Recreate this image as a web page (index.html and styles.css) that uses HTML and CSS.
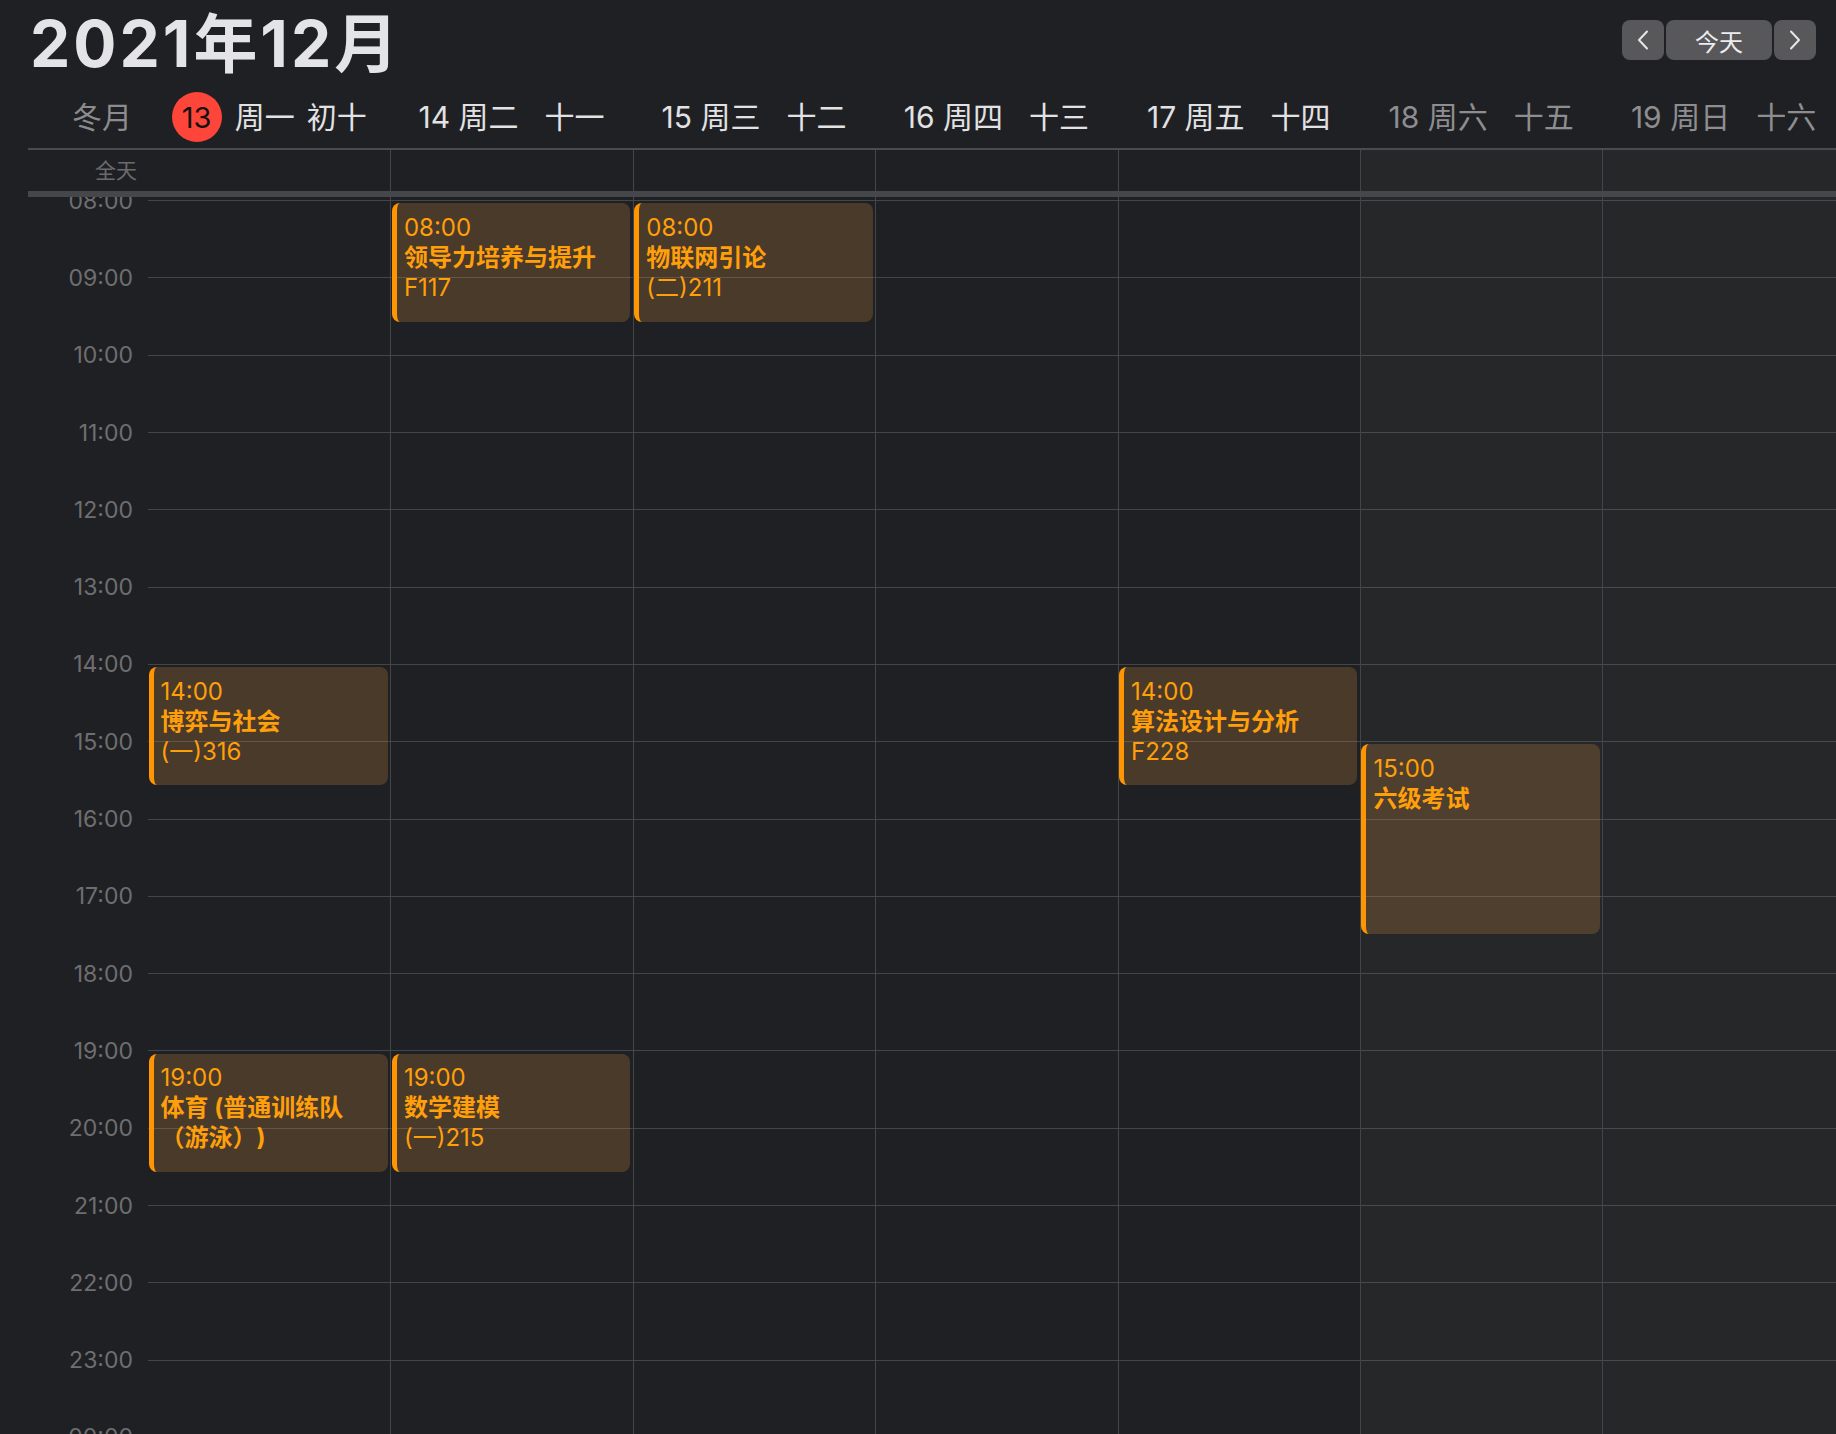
FILE: index.html
```html
<!DOCTYPE html>
<html lang="zh-CN">
<head>
    <meta charset="UTF-8">
    <meta name="viewport" content="width=device-width, initial-scale=1.0">
    <title>日历 - 2021年12月</title>
    <link rel="stylesheet" href="styles.css">
</head>
<body>
    <div class="calendar">
        <div class="topbar">
            <h1 class="month">2021年12月</h1>
            <div class="nav">
                <button class="nav-btn arrow" aria-label="上一周">
                    <svg width="14" height="20" viewBox="0 0 14 20"><polyline points="11,1.5 3,10 11,18.5" /></svg>
                </button>
                <button class="nav-btn today">今天</button>
                <button class="nav-btn arrow" aria-label="下一周">
                    <svg width="14" height="20" viewBox="0 0 14 20"><polyline points="3,1.5 11,10 3,18.5" /></svg>
                </button>
            </div>
        </div>

        <div class="days">
            <div class="lunar-month">冬月</div>
            <div class="day day-today">
                <span class="day-main"><span class="today-badge">13</span>周一</span>
                <span class="day-lunar">初十</span>
            </div>
            <div class="day">
                <span class="day-main">14 周二</span>
                <span class="day-lunar">十一</span>
            </div>
            <div class="day">
                <span class="day-main">15 周三</span>
                <span class="day-lunar">十二</span>
            </div>
            <div class="day">
                <span class="day-main">16 周四</span>
                <span class="day-lunar">十三</span>
            </div>
            <div class="day">
                <span class="day-main">17 周五</span>
                <span class="day-lunar">十四</span>
            </div>
            <div class="day weekend">
                <span class="day-main">18 周六</span>
                <span class="day-lunar">十五</span>
            </div>
            <div class="day weekend">
                <span class="day-main">19 周日</span>
                <span class="day-lunar">十六</span>
            </div>
        </div>

        <div class="allday">
            <div class="allday-label">全天</div>
            <div class="allday-cell first"></div>
            <div class="allday-cell"></div>
            <div class="allday-cell"></div>
            <div class="allday-cell"></div>
            <div class="allday-cell"></div>
            <div class="allday-cell weekend"></div>
            <div class="allday-cell weekend"></div>
        </div>

        <div class="divider"></div>

        <div class="timeline">
            <div class="hours">
                <div class="hour"><span class="hour-label">08:00</span><span class="hour-line"></span></div>
                <div class="hour"><span class="hour-label">09:00</span><span class="hour-line"></span></div>
                <div class="hour"><span class="hour-label">10:00</span><span class="hour-line"></span></div>
                <div class="hour"><span class="hour-label">11:00</span><span class="hour-line"></span></div>
                <div class="hour"><span class="hour-label">12:00</span><span class="hour-line"></span></div>
                <div class="hour"><span class="hour-label">13:00</span><span class="hour-line"></span></div>
                <div class="hour"><span class="hour-label">14:00</span><span class="hour-line"></span></div>
                <div class="hour"><span class="hour-label">15:00</span><span class="hour-line"></span></div>
                <div class="hour"><span class="hour-label">16:00</span><span class="hour-line"></span></div>
                <div class="hour"><span class="hour-label">17:00</span><span class="hour-line"></span></div>
                <div class="hour"><span class="hour-label">18:00</span><span class="hour-line"></span></div>
                <div class="hour"><span class="hour-label">19:00</span><span class="hour-line"></span></div>
                <div class="hour"><span class="hour-label">20:00</span><span class="hour-line"></span></div>
                <div class="hour"><span class="hour-label">21:00</span><span class="hour-line"></span></div>
                <div class="hour"><span class="hour-label">22:00</span><span class="hour-line"></span></div>
                <div class="hour"><span class="hour-label">23:00</span><span class="hour-line"></span></div>
                <div class="hour"><span class="hour-label">00:00</span><span class="hour-line"></span></div>
            </div>

            <!-- event top = 3.7 + (start - 8) * 77.3 + 2.5, height = minutes / 60 * 77.3 - 4 -->
            <div class="cols">
                <div class="col first">
                    <div class="event" style="top: 470px; height: 118.4px;">
                        <div class="ev-time">14:00</div>
                        <div class="ev-title">博弈与社会</div>
                        <div class="ev-room">(一)316</div>
                    </div>
                    <div class="event" style="top: 856.5px; height: 118.4px;">
                        <div class="ev-time">19:00</div>
                        <div class="ev-title">体育 (普通训练队（游泳）)</div>
                    </div>
                </div>
                <div class="col">
                    <div class="event" style="top: 6.2px; height: 118.4px;">
                        <div class="ev-time">08:00</div>
                        <div class="ev-title">领导力培养与提升</div>
                        <div class="ev-room">F117</div>
                    </div>
                    <div class="event" style="top: 856.5px; height: 118.4px;">
                        <div class="ev-time">19:00</div>
                        <div class="ev-title">数学建模</div>
                        <div class="ev-room">(一)215</div>
                    </div>
                </div>
                <div class="col">
                    <div class="event" style="top: 6.2px; height: 118.4px;">
                        <div class="ev-time">08:00</div>
                        <div class="ev-title">物联网引论</div>
                        <div class="ev-room">(二)211</div>
                    </div>
                </div>
                <div class="col"></div>
                <div class="col">
                    <div class="event" style="top: 470px; height: 118.4px;">
                        <div class="ev-time">14:00</div>
                        <div class="ev-title">算法设计与分析</div>
                        <div class="ev-room">F228</div>
                    </div>
                </div>
                <div class="col weekend">
                    <div class="event" style="top: 547.3px; height: 189.3px;">
                        <div class="ev-time">15:00</div>
                        <div class="ev-title">六级考试</div>
                    </div>
                </div>
                <div class="col weekend"></div>
            </div>
        </div>
    </div>
</body>
</html>
```

FILE: styles.css
```css
html, body {
    margin: 0;
    height: 100%;
}

body {
    background-color: #1f2023;
    color: #e2e2e4;
    font-family: Inter, "Noto Sans CJK SC", sans-serif;
    overflow: hidden;
}

.calendar {
    height: 100vh;
    display: flex;
    flex-direction: column;
    padding-left: 28px;
    box-sizing: border-box;
}

/* top bar */
.topbar {
    height: 86px;
    flex: none;
    display: flex;
    justify-content: space-between;
    align-items: flex-start;
    padding: 0 20px 0 2px;
}

.month {
    margin: 0;
    font-size: 64px;
    line-height: 88px;
    font-weight: 700;
    color: #e4e4e6;
    letter-spacing: 3px;
}

.nav {
    display: flex;
    gap: 2px;
    margin-top: 20px;
}

.nav-btn {
    height: 40px;
    border: none;
    border-radius: 8px;
    background-color: #58585b;
    color: #ececee;
    font-family: inherit;
    padding: 0;
    display: flex;
    align-items: center;
    justify-content: center;
}

.nav-btn.arrow {
    width: 42px;
}

.nav-btn.today {
    width: 106px;
    font-size: 24px;
}

.nav-btn svg polyline {
    fill: none;
    stroke: #e6e6e8;
    stroke-width: 2;
    stroke-linecap: round;
    stroke-linejoin: round;
}

/* day headers */
.days {
    height: 58px;
    padding-bottom: 4px;
    flex: none;
    display: grid;
    grid-template-columns: 120px repeat(7, 242.4px);
    align-items: center;
    border-bottom: 2px solid #4a4b4e;
}

.lunar-month {
    text-align: right;
    padding-right: 16px;
    font-size: 30px;
    color: #8c8c8f;
}

.day {
    display: flex;
    justify-content: center;
    align-items: center;
    gap: 26px;
    font-size: 30px;
    color: #e2e2e4;
    white-space: nowrap;
}

.day.weekend {
    color: #8e8e91;
}

.day-today {
    gap: 12px;
}

.day-main {
    display: flex;
    align-items: center;
    gap: 13px;
}

.today-badge {
    width: 50px;
    height: 50px;
    margin-top: 4px;
    border-radius: 50%;
    background-color: #fe453a;
    color: #111;
    display: flex;
    align-items: center;
    justify-content: center;
    font-size: 29px;
}

/* all day row */
.allday {
    height: 41px;
    flex: none;
    display: grid;
    grid-template-columns: 120px repeat(7, 242.4px);
}

.allday-label {
    text-align: right;
    padding-right: 11px;
    font-size: 21px;
    line-height: 41px;
    color: #6b6b6e;
}

.allday-cell {
    border-left: 1px solid #444548;
}

.allday-cell.first {
    border-left: none;
}

.allday-cell.weekend,
.col.weekend {
    background-color: rgba(255, 255, 255, 0.03);
}

.divider {
    height: 6px;
    flex: none;
    background-color: #46474a;
}

/* time grid */
.timeline {
    flex: 1;
    position: relative;
    overflow: hidden;
}

.hours {
    padding-top: 3.2px;
}

.hour {
    height: 77.3px;
    display: grid;
    grid-template-columns: 120px 1fr;
}

.hour-label {
    text-align: right;
    padding-right: 15px;
    font-size: 23px;
    line-height: 28px;
    margin-top: -13.5px;
    height: 28px;
    color: #6e6e71;
}

.hour-line {
    border-top: 1px solid #444548;
}

.cols {
    position: absolute;
    top: 0;
    bottom: 0;
    left: 120px;
    display: flex;
}

.col {
    flex: 0 0 242.4px;
    box-sizing: border-box;
    position: relative;
    border-left: 1px solid #444548;
}

.col.first {
    border-left: none;
}

.event {
    position: absolute;
    left: 0.5px;
    right: 2.5px;
    box-sizing: border-box;
    border-left: 5px solid #ff9500;
    border-radius: 8px;
    background-color: rgba(203, 136, 63, 0.25);
    padding: 9.5px 7px 0 7px;
    color: #ff9f0a;
    font-size: 24px;
    line-height: 30px;
    overflow: hidden;
    text-spacing-trim: space-all;
}

.ev-title {
    font-weight: 700;
}
```
